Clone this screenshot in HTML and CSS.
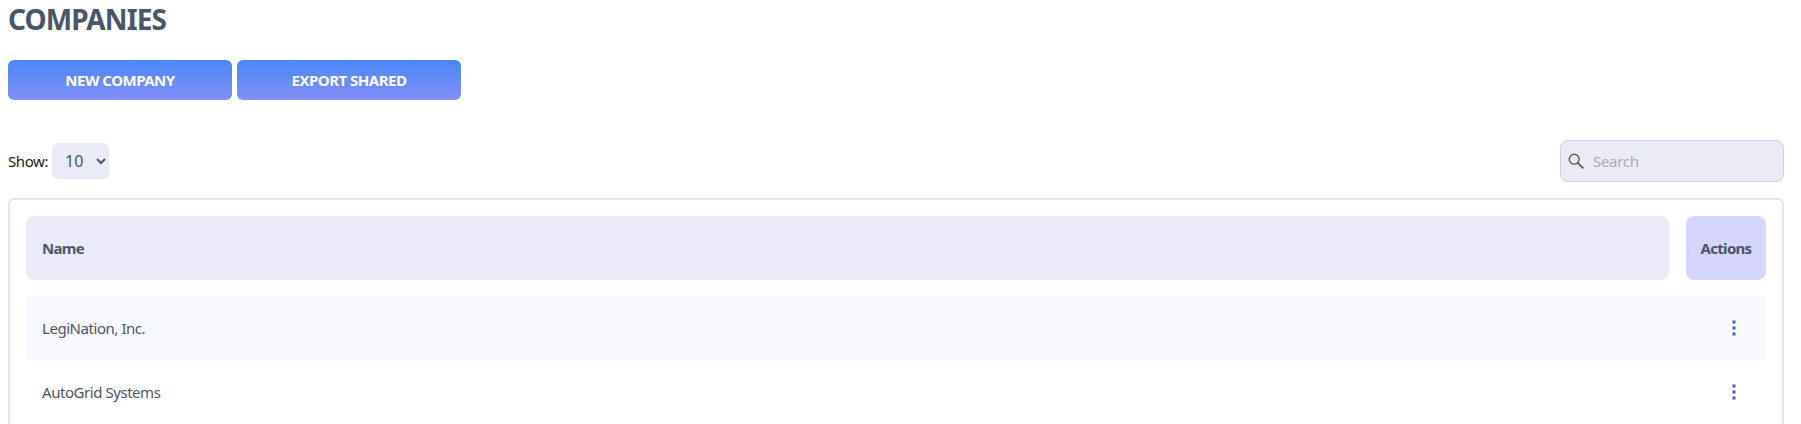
FILE: index.html
```html
<!DOCTYPE html>
<html lang="en">

<head>
  <meta charset="UTF-8">
  <title>Companies</title>
  <link rel="stylesheet" href="styles.css">
</head>

<body>
  <div class="page">
    <h1 class="title">COMPANIES</h1>
    <div class="btn-row">
      <button class="btn">NEW COMPANY</button>
      <button class="btn">EXPORT SHARED</button>
    </div>
    <div class="toolbar">
      <label class="show">Show:
        <select class="show-select">
          <option>10</option>
        </select>
      </label>
      <div class="search">
        <svg class="search-icon" viewBox="0 0 16 16" width="16" height="16">
          <circle cx="6.2" cy="6.2" r="4.9" fill="none" stroke="#5a5a5f" stroke-width="1.4"/>
          <path d="M9.8 9.8 15.4 15.4" fill="none" stroke="#5a5a5f" stroke-width="1.8"/>
        </svg>
        <input class="search-input" type="text" placeholder="Search">
      </div>
    </div>
    <div class="card">
      <div class="head">
        <div class="head-name">Name</div>
        <div class="head-actions">Actions</div>
      </div>
      <div class="row row-alt">
        <span>LegiNation, Inc.</span>
        <svg class="dots" viewBox="0 0 4 16" width="4" height="16"><rect x="0.5" y="0.5" width="3" height="3"/><rect x="0.5" y="6.5" width="3" height="3"/><rect x="0.5" y="12.5" width="3" height="3"/></svg>
      </div>
      <div class="row">
        <span>AutoGrid Systems</span>
        <svg class="dots" viewBox="0 0 4 16" width="4" height="16"><rect x="0.5" y="0.5" width="3" height="3"/><rect x="0.5" y="6.5" width="3" height="3"/><rect x="0.5" y="12.5" width="3" height="3"/></svg>
      </div>
    </div>
  </div>
</body>

</html>
```
FILE: styles.css
```css
html, body {
  margin: 0;
  height: 424px;
  overflow: hidden;
  background: #fff;
}

.page {
  padding: 0 17px 0 8px;
  font-family: "Noto Sans", "Liberation Sans", sans-serif;
  color: #4a5568;
}

.title {
  margin: 0;
  height: 60px;
  padding-top: 1px;
  box-sizing: border-box;
  font-size: 28px;
  line-height: 36px;
  font-weight: 700;
  letter-spacing: -0.9px;
  color: #4a5568;
}

.btn-row {
  display: flex;
  gap: 5px;
}

.btn {
  width: 224px;
  height: 40px;
  border: none;
  border-radius: 6px;
  background: linear-gradient(#4a86f7, #848ff7);
  color: #fff;
  font-family: inherit;
  font-size: 15px;
  font-weight: 700;
  letter-spacing: -0.5px;
  padding: 0;
}

.toolbar {
  display: flex;
  justify-content: space-between;
  align-items: center;
  margin-top: 40px;
  height: 42px;
}

.show {
  display: flex;
  align-items: center;
  gap: 4px;
  font-size: 15px;
  letter-spacing: -0.4px;
  color: #1a1a1a;
}

.show-select {
  width: 57px;
  height: 36px;
  border: none;
  border-radius: 6px;
  background: #ebeaf7;
  color: #4a5568;
  font-family: inherit;
  font-size: 16px;
  padding-left: 9px;
}

.search {
  position: relative;
  width: 224px;
  height: 42px;
}

.search-icon {
  position: absolute;
  left: 8px;
  top: 13px;
}

.search-input {
  width: 100%;
  height: 100%;
  box-sizing: border-box;
  border: 1px solid #cfcfde;
  border-radius: 8px;
  background: #ebeaf7;
  padding: 0 8px 0 32px;
  font-family: inherit;
  font-size: 15px;
  letter-spacing: -0.3px;
  outline: none;
}

.search-input::placeholder {
  color: #a9abb5;
}

.card {
  margin-top: 16px;
  height: 400px;
  border: 2px solid #e6e6ec;
  border-radius: 6px;
  padding: 16px;
  background: #fff;
}

.head {
  display: flex;
  gap: 17px;
  height: 64px;
  font-size: 15px;
  font-weight: 700;
  letter-spacing: -0.7px;
  margin-bottom: 16px;
}

.head-name,
.head-actions {
  display: flex;
  align-items: center;
  border-radius: 8px;
}

.head-name {
  flex: 1;
  padding-left: 16px;
  background: #ebeaf8;
}

.head-actions {
  width: 80px;
  justify-content: center;
  background: #d6d5fd;
}

.row {
  display: flex;
  justify-content: space-between;
  align-items: center;
  height: 64px;
  padding: 0 30px 0 16px;
  font-size: 15px;
  letter-spacing: -0.45px;
}

.row-alt {
  background: #f8f9ff;
}

.dots {
  fill: #4a5ccb;
}
```
